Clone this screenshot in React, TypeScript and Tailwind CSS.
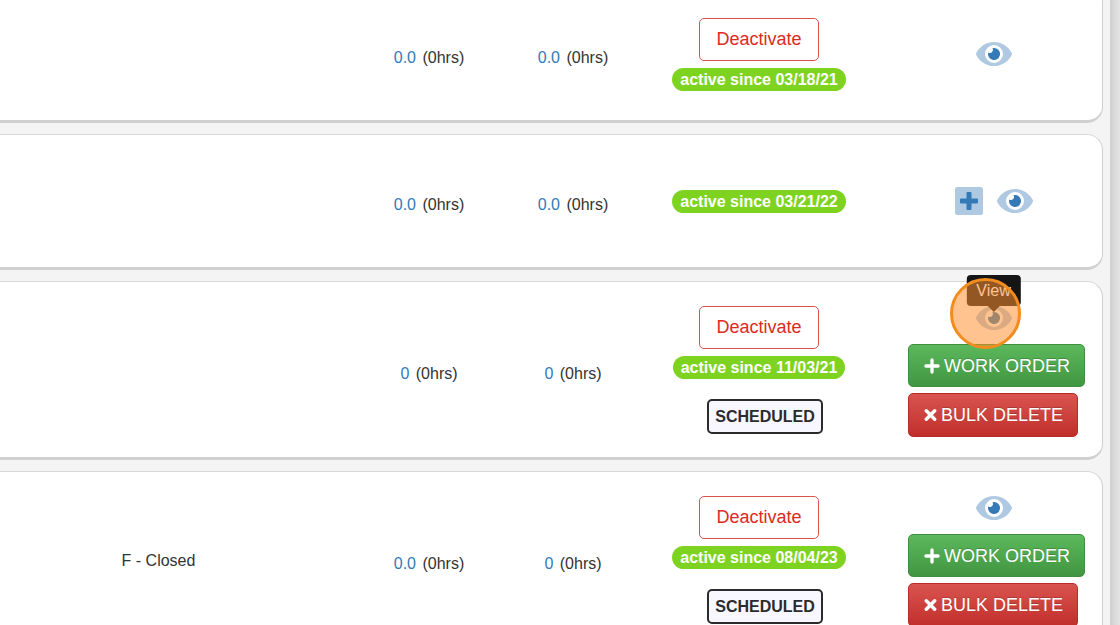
import type { ReactNode } from "react";

interface Item {
  id: number;
  status?: string;
  estimated: string;
  actual: string;
  activeSince: string;
  canDeactivate?: boolean;
  canAdd?: boolean;
  scheduled?: boolean;
  highlighted?: boolean;
}

const items: Item[] = [
  {
    id: 1,
    estimated: "0.0",
    actual: "0.0",
    activeSince: "03/18/21",
    canDeactivate: true,
  },
  {
    id: 2,
    estimated: "0.0",
    actual: "0.0",
    activeSince: "03/21/22",
    canAdd: true,
  },
  {
    id: 3,
    estimated: "0",
    actual: "0",
    activeSince: "11/03/21",
    canDeactivate: true,
    scheduled: true,
    highlighted: true,
  },
  {
    id: 4,
    status: "F - Closed",
    estimated: "0.0",
    actual: "0",
    activeSince: "08/04/23",
    canDeactivate: true,
    scheduled: true,
  },
];

function EyeIcon() {
  return (
    <svg viewBox="0 0 576 512" className="h-8 w-9" aria-hidden="true">
      <path
        fill="#b0c9e2"
        d="M572.52 241.4C518.29 135.59 410.93 64 288 64S57.68 135.64 3.48 241.41a32.35 32.35 0 0 0 0 29.19C57.71 376.41 165.07 448 288 448s230.32-71.64 284.52-177.41a32.35 32.35 0 0 0 0-29.19zM288 400a144 144 0 1 1 144-144 143.93 143.93 0 0 1-144 144z"
      />
      <path
        fill="#337ab7"
        d="M380.66 280.87a95.78 95.78 0 1 1-184.87-50.18 47.85 47.85 0 0 0 66.9-66.9 95.3 95.3 0 0 1 118 117.08z"
      />
    </svg>
  );
}

function PlusSquareIcon() {
  return (
    <svg viewBox="0 0 28 32" className="h-8 w-7" aria-hidden="true">
      <rect y="2" width="28" height="28" rx="2.5" fill="#b0c9e2" />
      <path
        fill="#337ab7"
        d="M12.5 7h3a1 1 0 0 1 1 1v5.5H22a1 1 0 0 1 1 1v3a1 1 0 0 1-1 1h-5.500V24a1 1 0 0 1-1 1h-3a1 1 0 0 1-1-1v-5.500H6a1 1 0 0 1-1-1v-3a1 1 0 0 1 1-1h5.500V8a1 1 0 0 1 1-1z"
      />
    </svg>
  );
}

function PlusIcon() {
  return (
    <svg viewBox="0 0 16 16" className="size-4" aria-hidden="true">
      <path
        d="M8 1.900v12.200M1.900 8h12.200"
        stroke="white"
        strokeWidth="3.300"
        strokeLinecap="round"
      />
    </svg>
  );
}

function TimesIcon() {
  return (
    <svg viewBox="0 0 13 14" className="h-3.5 w-[13px]" aria-hidden="true">
      <path
        d="M2.300 2.800l8.400 8.400M10.700 2.800l-8.400 8.400"
        stroke="white"
        strokeWidth="3.400"
        strokeLinecap="round"
      />
    </svg>
  );
}

function Hours({ value }: { value: string }) {
  return (
    <>
      <a href="#hours" className="mr-0.5 text-[#337ab7]">
        {value}
      </a>{" "}
      (0hrs)
    </>
  );
}

function Cell({ children, className = "" }: { children?: ReactNode; className?: string }) {
  return (
    <td className={`border-t border-b-3 border-t-[#d8d8d8] border-b-[#d0d0d0] bg-white p-0 text-center ${className}`}>
      {children}
    </td>
  );
}

function ViewHint() {
  return (
    <>
      <div
        role="tooltip"
        className="absolute bottom-7 left-1/2 -translate-x-1/2 rounded bg-[#151515] px-2.5 py-1 text-base leading-[23px] text-white"
      >
        View
        <span className="absolute top-full left-1/2 -translate-x-1/2 border-x-6 border-t-6 border-x-transparent border-t-[#151515]" />
      </div>
      <div className="absolute -top-6 -left-[26px] size-[71px] rounded-full border-3 border-[#f28c1e] bg-[#ff9130]/54" />
    </>
  );
}

function Row({ item }: { item: Item }) {
  return (
    <tr className={item.scheduled ? "h-[179px]" : "h-[136px]"}>
      <Cell className="pt-0.5 pr-10">{item.status}</Cell>

      <Cell className="pt-2">
        <Hours value={item.estimated} />
      </Cell>

      <Cell className="pt-2">
        <Hours value={item.actual} />
      </Cell>

      <Cell className="pr-3">
        <div className="flex flex-col items-center">
          {item.canDeactivate && (
            <button
              type="button"
              className="mb-[7px] h-[43px] rounded-[5px] border border-[#d9534f] bg-white px-4 text-lg text-[#dc2a20]"
            >
              Deactivate
            </button>
          )}

          <span className="rounded-full bg-[#7ed321] px-2 leading-[23px] font-bold text-white">
            active since {item.activeSince}
          </span>

          {item.scheduled && (
            <div className="mt-5 pl-3">
              <span className="block rounded-[5px] border-2 border-[#2b2b2b] bg-[#f8f6ff] px-1.5 leading-[31px] font-bold text-[#2b2b2b]">
                SCHEDULED
              </span>
            </div>
          )}
        </div>
      </Cell>

      <Cell className="rounded-r-2xl border-r border-r-[#d0d0d0]">
        <div className="flex items-center justify-center gap-3.5">
          {item.canAdd && (
            <a href="#add" aria-label="Add">
              <PlusSquareIcon />
            </a>
          )}

          <div className="relative">
            <a href="#view" aria-label="View">
              <EyeIcon />
            </a>
            {item.highlighted && <ViewHint />}
          </div>
        </div>

        {item.scheduled && (
          <div className="mt-2.5 flex flex-col items-start gap-1.5 pl-[23px] text-lg text-white">
            <button
              type="button"
              className="flex h-[43px] items-center gap-1 rounded-[5px] border border-[#3e8f3e] bg-linear-to-b from-[#5cb85c] to-[#419641] pr-3.5 pl-[15px] text-shadow-[0_-1px_0_rgb(0_0_0/0.2)]"
            >
              <PlusIcon />
              WORK ORDER
            </button>

            <button
              type="button"
              className="flex h-11 items-center gap-1 rounded-[5px] border border-[#b92c28] bg-linear-to-b from-[#d9534f] to-[#c12e2a] pr-3.5 pl-[15px] text-shadow-[0_-1px_0_rgb(0_0_0/0.2)]"
            >
              <TimesIcon />
              BULK DELETE
            </button>
          </div>
        )}
      </Cell>
    </tr>
  );
}

export default function App() {
  return (
    <div className="flex h-screen overflow-hidden bg-[#f4f4f4] font-['Liberation_Sans',Arial,sans-serif] text-base text-[#333]">

      <main className="min-w-0 flex-1 pr-[7px]">
        <table className="-mt-6 w-full table-fixed border-separate border-spacing-x-0 border-spacing-y-[11px]">
          <colgroup>
            <col />
            <col className="w-36" />
            <col className="w-36" />
            <col className="w-60" />
            <col className="w-[218px]" />
          </colgroup>
          <tbody>
            {items.map((item) => (
              <Row key={item.id} item={item} />
            ))}
          </tbody>
        </table>
      </main>

      <div className="w-2.5 bg-linear-to-r from-[#d0d0d0] to-[#e4e4e4]" />

    </div>
  );
}
